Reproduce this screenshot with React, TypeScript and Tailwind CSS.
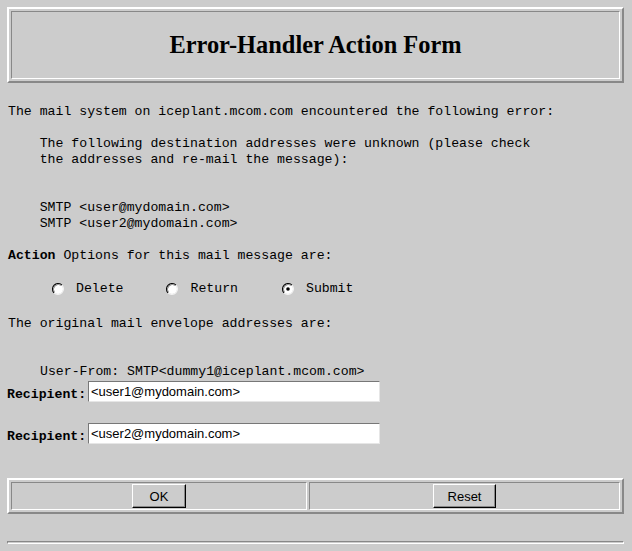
import React from "react";

function Radio({ checked }: { checked?: boolean }) {
  return (
    <svg width="12" height="12" viewBox="0 0 12 12" className="shrink-0">
      <circle cx="6" cy="6" r="5" fill="#ffffff" />
      <path d="M1.76 10.24 A6 6 0 0 1 10.24 1.76" fill="none" stroke="#000000" strokeWidth="1.2" transform="translate(0.4 0.4) scale(0.93)" />
      <path d="M2.5 9.5 A5 5 0 0 1 9.5 2.5" fill="none" stroke="#888888" strokeWidth="1" />
      <path d="M10.24 1.76 A6 6 0 0 1 1.76 10.24" fill="none" stroke="#f4f4f4" strokeWidth="1.2" transform="translate(0.4 0.4) scale(0.93)" />
      {checked && <circle cx="6" cy="6" r="1.8" fill="#000000" />}
    </svg>
  );
}

function RecipientRow({ value, className }: { value: string; className?: string }) {
  return (
    <div className={"flex items-center h-[21px] " + (className ?? "")}>
      <span className="ml-[7px] w-[81px] font-bold pt-[7px]">Recipient:</span>
      <input
        readOnly
        defaultValue={value}
        className="w-[292px] h-[21px] bg-white border border-t-[#777] border-l-[#777] border-b-[#e6e6e6] border-r-[#e6e6e6] px-[2px] font-['Liberation_Sans',Arial,sans-serif] text-[13px] text-black outline-none"
      />
    </div>
  );
}

export default function App() {
  return (
    <div className="w-[632px] h-[551px] overflow-hidden bg-[#cccccc] text-black font-['Liberation_Mono','Courier_New',monospace] text-[13.2px] leading-[16px]">
      {/* title box */}
      <div className="ml-[7px] mt-[7px] w-[617px] h-[76px] p-[2px] border-2 border-t-white border-l-white border-r-[#888] border-b-[#888]">
        <div className="h-full flex items-center justify-center border border-t-[#888] border-l-[#888] border-r-white border-b-white">
          <h1 className="font-['Liberation_Serif','Times_New_Roman',serif] font-bold text-[24.4px] leading-none">
            Error-Handler Action Form
          </h1>
        </div>
      </div>

      <pre className="mt-[21px] pl-[8px] font-['Liberation_Mono','Courier_New',monospace] text-[13.2px] leading-[16px]">
{`The mail system on iceplant.mcom.com encountered the following error:

    The following destination addresses were unknown (please check
    the addresses and re-mail the message):


    SMTP <user@mydomain.com>
    SMTP <user2@mydomain.com>`}
      </pre>

      <p className="mt-[16px] pl-[8px]">
        <span className="font-bold">Action</span> Options for this mail message are:
      </p>

      <div className="mt-[17px] h-[16px] flex items-center">
        <span className="ml-[52px]"><Radio /></span>
        <span className="ml-[12px]">Delete</span>
        <span className="ml-[43px]"><Radio /></span>
        <span className="ml-[12px]">Return</span>
        <span className="ml-[44px]"><Radio checked /></span>
        <span className="ml-[12px]">Submit</span>
      </div>

      <p className="mt-[19px] pl-[8px]">The original mail envelope addresses are:</p>

      <p className="mt-[32px] pl-[40px]">User-From: SMTP&lt;dummy1@iceplant.mcom.com&gt;</p>

      <RecipientRow className="mt-[1px]" value="<user1@mydomain.com>" />
      <RecipientRow className="mt-[21px]" value="<user2@mydomain.com>" />

      {/* buttons box */}
      <div className="ml-[7px] mt-[34px] w-[617px] h-[36px] p-[2px] border-2 border-t-white border-l-white border-r-[#888] border-b-[#888] flex gap-[2px]">
        <div className="w-[296px] h-full flex items-center justify-center border border-t-[#888] border-l-[#888] border-r-white border-b-white">
          <button className="w-[54px] h-[24px] border border-t-white border-l-white border-r-black border-b-black shadow-[inset_-1px_-1px_0_#888] font-['Liberation_Sans',Arial,sans-serif] text-[13px] leading-none">
            OK
          </button>
        </div>
        <div className="flex-1 h-full flex items-center justify-center border border-t-[#888] border-l-[#888] border-r-white border-b-white">
          <button className="w-[63px] h-[24px] border border-t-white border-l-white border-r-black border-b-black shadow-[inset_-1px_-1px_0_#888] font-['Liberation_Sans',Arial,sans-serif] text-[13px] leading-none">
            Reset
          </button>
        </div>
      </div>

      <div className="ml-[7px] mt-[27px] w-[617px] h-[3px] border border-t-[#888] border-l-[#888] border-r-white border-b-white" />
    </div>
  );
}
